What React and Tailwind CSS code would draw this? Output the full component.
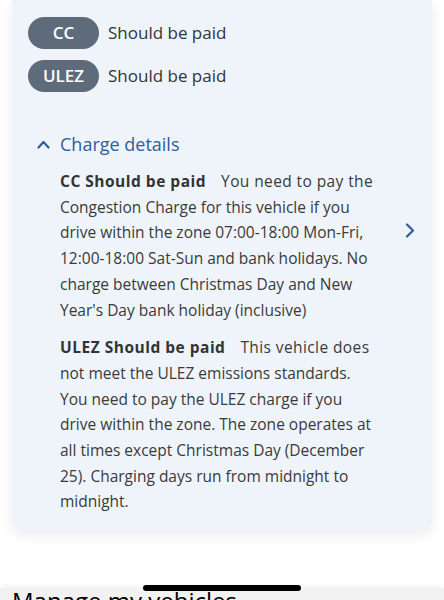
export default function App() {
  const font = { fontFamily: '"Open Sans", "Noto Sans", sans-serif' };
  const cc = [
    "Congestion Charge for this vehicle if you",
    "drive within the zone 07:00-18:00 Mon-Fri,",
    "12:00-18:00 Sat-Sun and bank holidays. No",
    "charge between Christmas Day and New",
    "Year's Day bank holiday (inclusive)",
  ];
  const ulez = [
    "not meet the ULEZ emissions standards.",
    "You need to pay the ULEZ charge if you",
    "drive within the zone. The zone operates at",
    "all times except Christmas Day (December",
    "25). Charging days run from midnight to",
    "midnight.",
  ];
  return (
    <div className="relative w-[444px] h-[600px] overflow-hidden bg-white" style={font}>
      <div className="mx-[12px] bg-[#eff4fb] rounded-b-[10px] shadow-[0_4px_14px_rgba(0,0,0,0.08)] pt-[17px] pb-[16px]">
        <div className="pl-[16px] flex flex-col gap-[11px]">
          <div className="flex items-center">
            <span className="w-[71px] h-[32px] rounded-full bg-[#5e6b7a] text-white font-semibold text-[17px] flex items-center justify-center">CC</span>
            <span className="ml-[9px] text-[17px] text-[#333]">Should be paid</span>
          </div>
          <div className="flex items-center">
            <span className="w-[71px] h-[32px] rounded-full bg-[#5e6b7a] text-white font-semibold text-[17px] flex items-center justify-center">ULEZ</span>
            <span className="ml-[9px] text-[17px] text-[#333]">Should be paid</span>
          </div>
        </div>
        <div className="mt-[39px] pl-[25px] flex items-center text-[#2e5d9b]">
          <svg width="13" height="9" viewBox="0 0 13 9" fill="none" stroke="#2e5d9b" strokeWidth="2.2" strokeLinecap="round" strokeLinejoin="round">
            <path d="M1.5 7.5 L6.5 2 L11.5 7.5" />
          </svg>
          <span className="ml-[10px] text-[18px] leading-[26px]">Charge details</span>
        </div>
        <div className="mt-[12px] pl-[48px] flex items-start">
          <p className="w-[335px] whitespace-nowrap text-[15.5px] leading-[25.7px] text-[#3a3a3a]">
            <span className="font-bold text-[#333] mr-[15px] tracking-[0.5px]">CC Should be paid</span>
            <span className="tracking-[0.4px]">You need to pay the</span>
            {cc.map((l, i) => (
              <span key={i} className="block">{l}</span>
            ))}
          </p>
          <svg className="ml-[10px] mt-[54px]" width="10" height="15" viewBox="0 0 10 15" fill="none" stroke="#2e5d9b" strokeWidth="2.2" strokeLinecap="round" strokeLinejoin="round">
            <path d="M2 1.5 L8 7.5 L2 13.5" />
          </svg>
        </div>
        <div className="mt-[12px] pl-[48px]">
          <p className="w-[345px] whitespace-nowrap text-[15.5px] leading-[25.7px] text-[#3a3a3a]">
            <span className="font-bold text-[#333] mr-[15px] tracking-[0.5px]">ULEZ Should be paid</span>
            <span className="tracking-[0.4px]">This vehicle does</span>
            {ulez.map((l, i) => (
              <span key={i} className="block">{l}</span>
            ))}
          </p>
        </div>
      </div>
      <div className="absolute left-0 right-0 top-[588px] h-[20px] bg-[#f2f2f2] shadow-[0_-2px_6px_rgba(0,0,0,0.05)] overflow-hidden">
        <div className="pl-[12px] mt-[-1px] text-[24px] leading-[28px] text-black">Manage my vehicles</div>
      </div>
      <div className="absolute left-[143px] top-[585px] w-[158px] h-[6px] rounded-full bg-black"></div>
    </div>
  );
}
